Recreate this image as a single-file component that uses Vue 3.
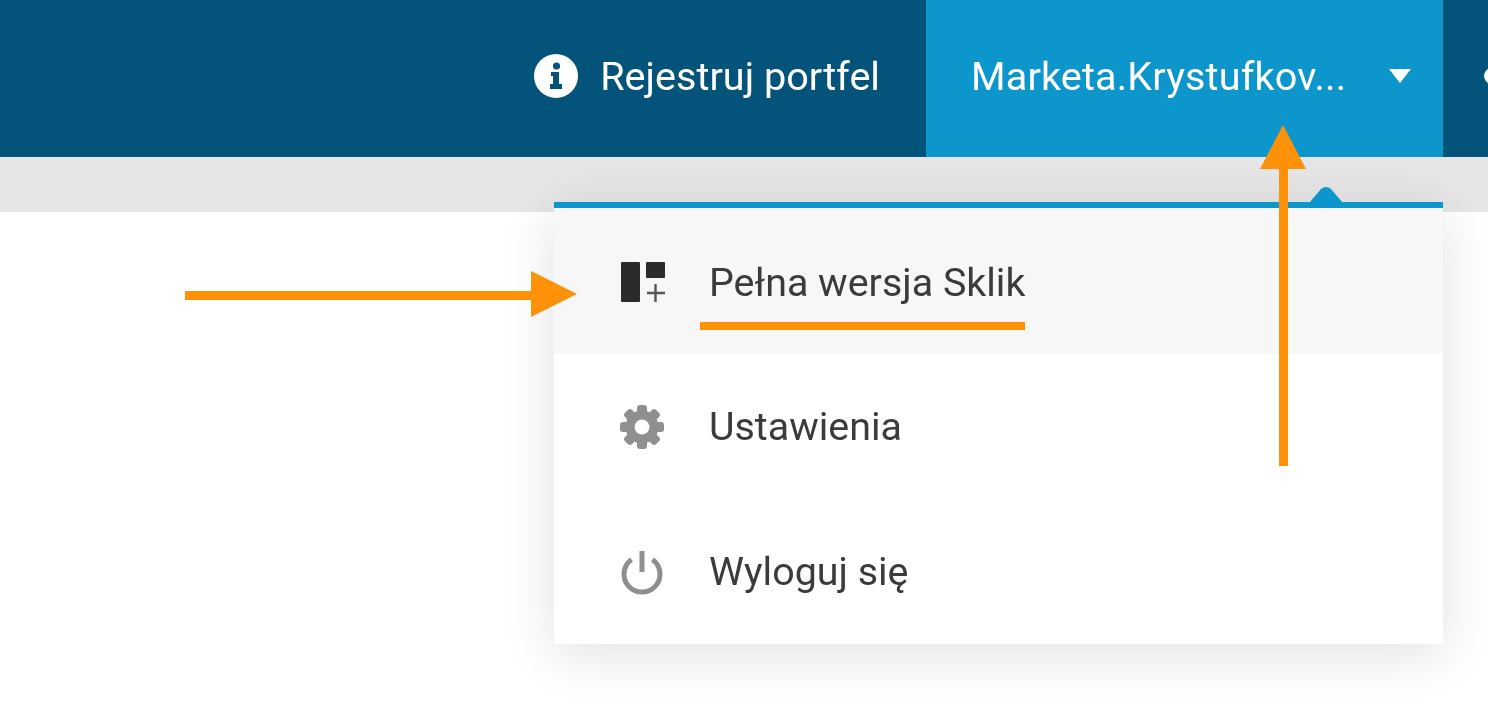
<script setup>
const items = [
  { label: 'Pełna wersja Sklik', icon: 'sklik', active: true },
  { label: 'Ustawienia', icon: 'gear', active: false },
  { label: 'Wyloguj się', icon: 'power', active: false },
]
</script>

<template>
  <div class="page">
    <header class="topbar">
      <div class="register">
        <svg class="info" viewBox="0 0 44 44">
          <circle cx="22" cy="22" r="22" fill="#fff" />
          <circle cx="22.5" cy="12" r="3.6" fill="#03537a" />
          <path d="M17 18h8v12h3v5H16v-5h3v-8h-2z" fill="#03537a" />
        </svg>
        <span>Rejestruj portfel</span>
      </div>
      <div class="user">
        <span class="name">Marketa.Krystufkov...</span>
        <span class="caret"></span>
      </div>
      <div class="rest"><span class="peek"></span></div>
    </header>
    <div class="band"></div>

    <div class="menu">
      <svg class="notch" viewBox="0 0 32 15"><path d="M0 15 11 2q5-4 10 0l11 13z" fill="#0d96cb" /></svg>
      <div v-for="item in items" :key="item.label" class="row" :class="{ active: item.active }">
        <svg v-if="item.icon === 'sklik'" class="ico shifted" viewBox="0 0 48 44">
          <rect x="1" y="1" width="19" height="40" rx="1" fill="#2b2b2b" />
          <rect x="26" y="1" width="19" height="16" rx="1" fill="#2b2b2b" />
          <path d="M35.5 23v18M27 32h18" stroke="#555" stroke-width="2.4" fill="none" />
        </svg>
        <svg v-else-if="item.icon === 'gear'" class="ico" viewBox="0 0 48 44">
          <g transform="translate(22 22)" fill="#8f8f8f">
            <circle r="16.5" />
            <rect v-for="a in [0, 45, 90, 135, 180, 225, 270, 315]" :key="a" x="-5" y="-22" width="10" height="9" rx="3" :transform="`rotate(${a})`" />
            <circle r="7.5" fill="#fff" />
          </g>
        </svg>
        <svg v-else class="ico low" viewBox="0 0 48 44">
          <path d="M11.5 8.5a18 18 0 1 0 21 0" fill="none" stroke="#8f8f8f" stroke-width="5" />
          <path d="M22 0v21" stroke="#8f8f8f" stroke-width="5" fill="none" />
        </svg>
        <span class="label">{{ item.label }}</span>
      </div>
    </div>

    <svg class="notes" viewBox="0 0 1488 720">
      <g fill="#fd9108">
        <rect x="700" y="322" width="325" height="8" />
        <rect x="185" y="291" width="350" height="9" />
        <path d="M531 271l46 23-46 23z" />
        <rect x="1279" y="165" width="9" height="301" />
        <path d="M1283 125l23 44h-46z" />
      </g>
    </svg>
  </div>
</template>

<style>
html, body { margin: 0; background: #fff; }
</style>

<style scoped>
.page {
  position: relative;
  width: 1488px;
  height: 720px;
  overflow: hidden;
  background: #fff;
  font-family: Roboto, "Liberation Sans", sans-serif;
  filter: blur(0.6px);
}
.topbar {
  display: flex;
  height: 157px;
  background: #03537a;
  color: #fff;
  font-size: 39.6px;
}
.register {
  display: flex;
  align-items: center;
  gap: 22px;
  margin-left: auto;
  margin-right: 46px;
  padding-bottom: 5px;
}
.info { width: 44px; height: 44px; }
.user {
  display: flex;
  align-items: center;
  width: 517px;
  box-sizing: border-box;
  padding: 0 32px 5px 45px;
  background: #0d96cb;
}
.name { flex: 1; white-space: nowrap; letter-spacing: 0.15px; }
.caret {
  width: 0;
  height: 0;
  border-left: 11px solid transparent;
  border-right: 11px solid transparent;
  border-top: 14px solid #fff;
}
.rest { display: flex; align-items: center; width: 45px; padding-bottom: 5px; overflow: hidden; }
.peek {
  flex: none;
  width: 40px;
  height: 24px;
  margin-left: 41px;
  border-radius: 50%;
  background: #fff;
}
.band { height: 55px; background: #e6e6e6; }
.menu {
  position: absolute;
  left: 554px;
  top: 202px;
  width: 889px;
  background: #fff;
  border-top: 6px solid #0d96cb;
  box-shadow: 0 10px 50px rgba(0, 0, 0, 0.12);
}
.notch {
  position: absolute;
  right: 101px;
  top: -21px;
  width: 32px;
  height: 15px;
}
.row {
  display: flex;
  align-items: center;
  height: 145px;
  padding-left: 66px;
  color: #3b3b3b;
  font-size: 39.4px;
}
.row.active { height: 146px; background: #f7f7f7; padding-top: 2px; box-sizing: border-box; }
.ico { width: 48px; height: 44px; flex: none; margin-right: 41px; }
.shifted { position: relative; top: 1px; }
.low { position: relative; top: 1px; }
.label { white-space: nowrap; }
.notes {
  position: absolute;
  inset: 0;
  width: 1488px;
  height: 720px;
  pointer-events: none;
}
</style>
